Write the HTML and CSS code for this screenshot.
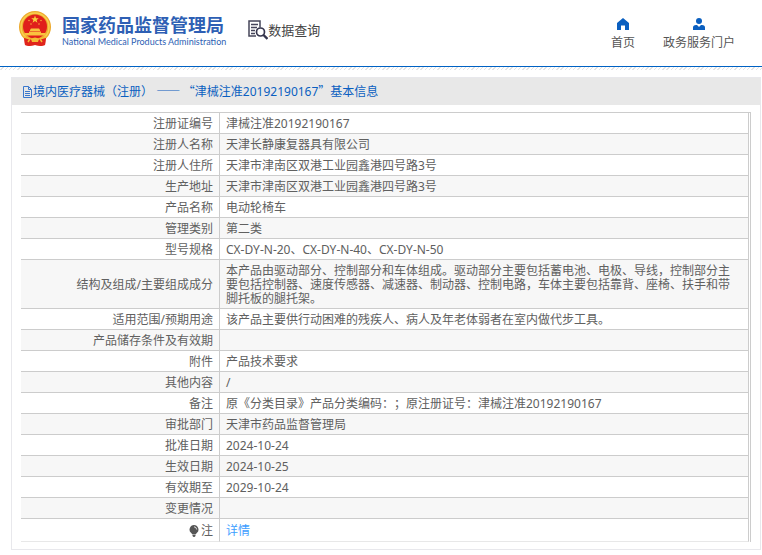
FILE: index.html
```html
<!DOCTYPE html>
<html lang="zh-CN">
<head>
    <meta charset="UTF-8">
    <meta name="viewport" content="width=device-width, initial-scale=1.0">
    <title>数据查询</title>
    <link rel="stylesheet" href="styles.css">
</head>
<body>
    <header class="header">
        <a class="logo" href="#">
            <svg class="emblem" viewBox="0 0 32 36" aria-hidden="true">
                <path fill="#e0241c" d="M5 24h22l-1 10-4 1-6-1-6 1-4-1z"/>
                <circle cx="16" cy="16" r="16" fill="#eda92c"/>
                <circle cx="16" cy="16" r="14" fill="none" stroke="#f8cf50" stroke-width="1.5"/>
                <circle cx="16" cy="15.500" r="12" fill="#e01f1b"/>
                <path fill="#f9cf3e" d="M16 4.500l1 2.700h2.800l-2.200 1.700.8 2.800-2.400-1.700-2.400 1.700.8-2.800-2.200-1.700H15z"/>
                <g fill="#f9a23e">
                    <circle cx="10" cy="9.500" r=".8"/>
                    <circle cx="22" cy="9.500" r=".8"/>
                    <circle cx="12" cy="13" r=".8"/>
                    <circle cx="20" cy="13" r=".8"/>
                </g>
                <path fill="#f9c23e" d="M11 19l1-1.500h8l1 1.500v1H11zM10 20.500h12V22h4.500v2.500h-21V22H10z"/>
                <path fill="#e0241c" d="M5 27q6-1 8 2h6q2-3 8-2l-1 7-4 1-6-1-6 1-4-1z"/>
                <path fill="none" stroke="#f4bb35" stroke-width="1.500" d="M5 26l6 2-2 3M27 26l-6 2 2 3"/>
                <path fill="#f4bb35" d="M12 28q4-3 8 0l-1 3h-6z"/>
            </svg>
            <span class="logo-text">
                <span class="logo-cn">国家药品监督管理局</span>
                <span class="logo-en">National Medical Products Administration</span>
            </span>
        </a>
        <div class="query">
            <svg class="query-icon" viewBox="0 0 20 20" aria-hidden="true">
                <path fill="none" stroke="#45455a" stroke-width="1.500" d="M12 7.500V1H1v15h7M3 4.500h7M3 7.500h6M3 10.500h4M3 13.500h4"/>
                <circle cx="12.500" cy="12" r="4" fill="#fff" stroke="#35354d" stroke-width="1.700"/>
                <path stroke="#35354d" stroke-width="2.400" d="M15.500 15l4 4"/>
            </svg>
            <span>数据查询</span>
        </div>
        <nav class="nav">
            <a href="#">
                <svg class="nav-icon" viewBox="0 0 12 12" aria-hidden="true">
                    <path fill="#0a5fc0" d="M6 0l6 5v7H8V7.500H4V12H0V5z"/>
                </svg>
                首页
            </a>
            <a href="#">
                <svg class="nav-icon" viewBox="0 0 12 12" aria-hidden="true">
                    <circle cx="6" cy="3" r="3" fill="#0a5fc0"/>
                    <path fill="#0a5fc0" d="M0 12V9.500Q0 7 3 7h1l2 2 2-2h1q3 0 3 2.500V12z"/>
                </svg>
                政务服务门户
            </a>
        </nav>
    </header>
    <div class="stripe"></div>

    <main class="panel">
        <h1 class="panel-title">
            <svg class="file-icon" viewBox="0 0 11 12" aria-hidden="true">
                <path fill="none" stroke="#3b78cc" d="M1.500.5h5l3 3v8h-8zM6.500.5v3h3M3 5.500h5M3 7.500h5M3 9.500h5"/>
            </svg>
            <span>境内医疗器械（注册） <span class="mark">—— “</span>津械注准20192190167<span class="mark">”</span>基本信息</span>
        </h1>
        <div class="panel-body">
            <table class="info">
                <tbody>
                    <tr><th scope="row">注册证编号</th><td>津械注准20192190167</td></tr>
                    <tr><th scope="row">注册人名称</th><td>天津长静康复器具有限公司</td></tr>
                    <tr><th scope="row">注册人住所</th><td>天津市津南区双港工业园鑫港四号路3号</td></tr>
                    <tr><th scope="row">生产地址</th><td>天津市津南区双港工业园鑫港四号路3号</td></tr>
                    <tr><th scope="row">产品名称</th><td>电动轮椅车</td></tr>
                    <tr><th scope="row">管理类别</th><td>第二类</td></tr>
                    <tr><th scope="row">型号规格</th><td>CX-DY-N-20、CX-DY-N-40、CX-DY-N-50</td></tr>
                    <tr><th scope="row">结构及组成/主要组成成分</th><td>本产品由驱动部分、控制部分和车体组成。驱动部分主要包括蓄电池、电极、导线，控制部分主要包括控制器、速度传感器、减速器、制动器、控制电路，车体主要包括靠背、座椅、扶手和带脚托板的腿托架。</td></tr>
                    <tr><th scope="row">适用范围/预期用途</th><td>该产品主要供行动困难的残疾人、病人及年老体弱者在室内做代步工具。</td></tr>
                    <tr><th scope="row">产品储存条件及有效期</th><td></td></tr>
                    <tr><th scope="row">附件</th><td>产品技术要求</td></tr>
                    <tr><th scope="row">其他内容</th><td>/</td></tr>
                    <tr><th scope="row">备注</th><td>原《分类目录》产品分类编码：；原注册证号：津械注准20192190167</td></tr>
                    <tr><th scope="row">审批部门</th><td>天津市药品监督管理局</td></tr>
                    <tr><th scope="row">批准日期</th><td>2024-10-24</td></tr>
                    <tr><th scope="row">生效日期</th><td>2024-10-25</td></tr>
                    <tr><th scope="row">有效期至</th><td>2029-10-24</td></tr>
                    <tr><th scope="row">变更情况</th><td></td></tr>
                    <tr class="note">
                        <th scope="row">
                            <svg class="bulb" viewBox="0 0 10 12" aria-hidden="true">
                                <path fill="#555" d="M5 0a4.500 4.500 0 0 1 3 7.800L6.500 9.500h-3L2 7.800A4.500 4.500 0 0 1 5 0zM3.500 10h3v1L5.500 12h-1l-1-1z"/>
                                <path fill="none" stroke="#fff" stroke-width=".8" d="M5 1.800q2.500.2 2.700 2.700"/>
                            </svg>注
                        </th>
                        <td><a href="#">详情</a></td>
                    </tr>
                </tbody>
            </table>
        </div>
    </main>
</body>
</html>
```

FILE: styles.css
```css
* {
    box-sizing: border-box;
}
body {
    margin: 0;
    background: #fff;
    color: #606060;
    font-family: "Noto Sans", "Noto Sans CJK SC", sans-serif;
    font-size: 12px;
    line-height: 14px;
    text-spacing-trim: space-all;
}
a {
    color: #409eff;
    text-decoration: none;
}
.header {
    display: flex;
    align-items: center;
    height: 67px;
    padding: 0 27px 8px 19px;
    border-bottom: 1px solid #0062c4;
}
.stripe {
    height: 3px;
    background: repeating-linear-gradient(135deg, #fff 0 2px, #e4e4e4 2px 3px);
}
.logo {
    display: flex;
    align-items: center;
    gap: 11px;
}
.emblem {
    width: 32px;
    height: 36px;
}
.logo-text {
    display: flex;
    flex-direction: column;
    padding-top: 4px;
    color: #2e5fb4;
    white-space: nowrap;
}
.logo-cn {
    font-size: 18px;
    font-weight: bold;
    line-height: 22px;
}
.logo-en {
    font-family: Lato, sans-serif;
    font-size: 9px;
    line-height: 12px;
}
.query {
    display: flex;
    align-items: center;
    margin-left: 22px;
    padding-top: 2px;
    color: #444;
    font-size: 13px;
}
.query-icon {
    width: 20px;
    height: 20px;
}
.nav {
    display: flex;
    gap: 28px;
    margin-left: auto;
    padding-top: 10px;
}
.nav a {
    display: flex;
    flex-direction: column;
    align-items: center;
    gap: 6px;
    color: #555;
}
.nav-icon {
    width: 12px;
    height: 12px;
}
.panel {
    margin: 7px 1px 5px 11px;
    border: 1px solid #e8e8ec;
}
.panel-title {
    display: flex;
    align-items: center;
    height: 27px;
    margin: 0;
    padding-left: 10px;
    background: #e8e8e8;
    color: #0a5fc0;
    font-size: 12px;
    font-weight: normal;
}
.file-icon {
    width: 11px;
    height: 12px;
}
.mark {
    font-family: "Noto Sans CJK SC", sans-serif;
}
.panel-body {
    padding: 7px 9px;
}
.info {
    width: 100%;
    border: solid #ccc;
    border-width: 1px 1px 0 0;
    border-collapse: separate;
    border-spacing: 0;
    padding-right: 1px;
}
.info th,
.info td {
    height: 21px;
    padding: 4px 6px 2px;
    border-right: 1px solid #ccc;
    border-bottom: 1px solid #ccc;
}
.info th {
    width: 199px;
    font-weight: normal;
    text-align: right;
}
.info td {
    padding-right: 12px;
}
.info tr:nth-child(even) {
    background: #f7f7f7;
}
.info .note th,
.info .note td {
    height: 23px;
    border-bottom-color: #e8e8e8;
}
.bulb {
    width: 10px;
    height: 12px;
    margin-right: 2px;
    vertical-align: -2px;
}
```
